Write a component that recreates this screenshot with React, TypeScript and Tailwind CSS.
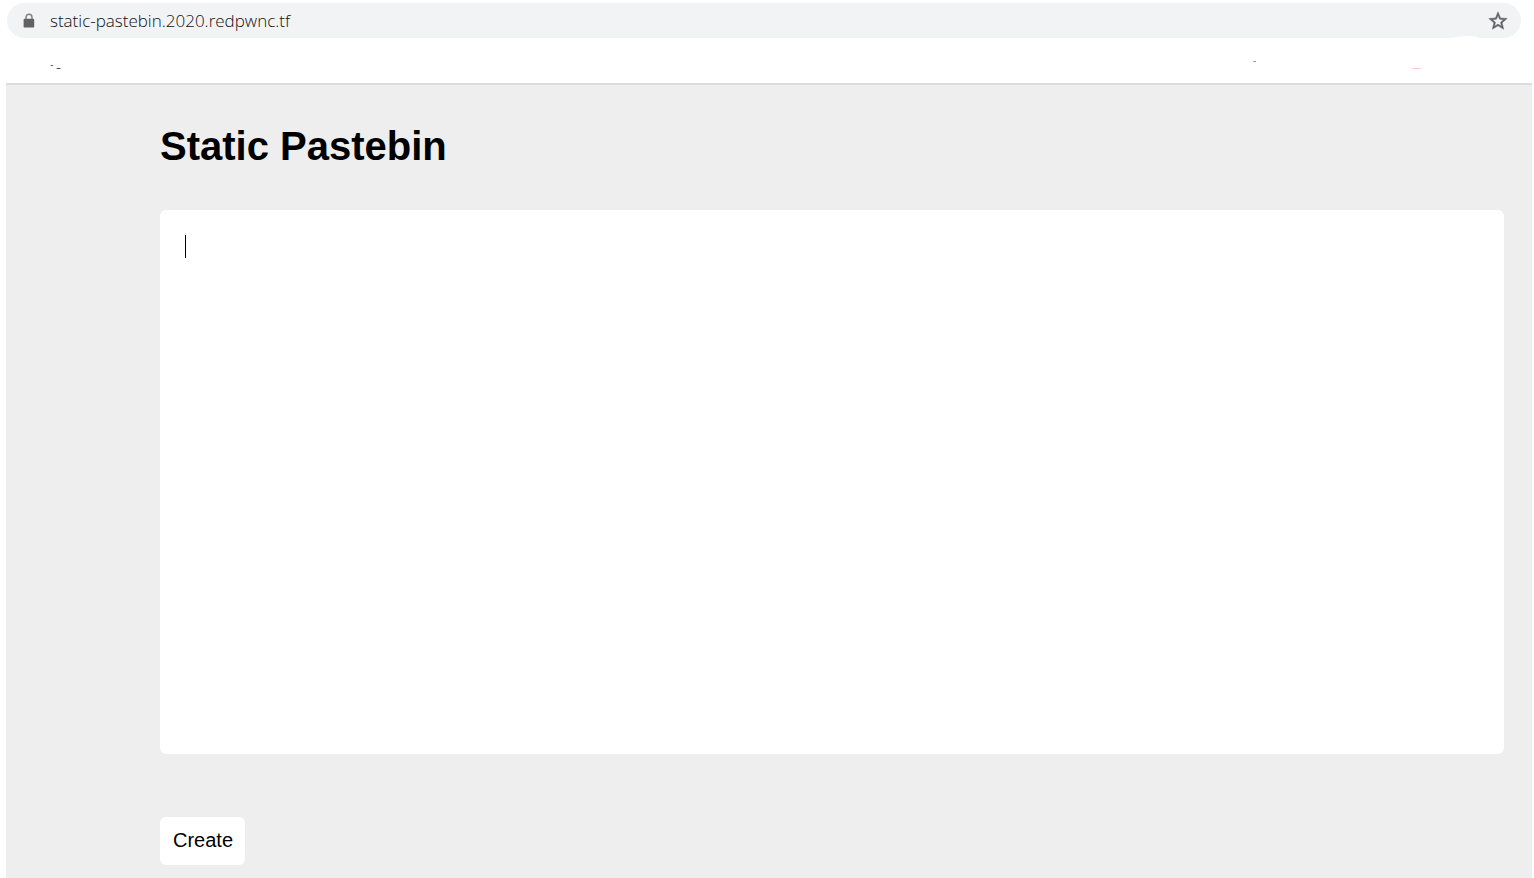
import { useState } from "react";

function LockIcon() {
  return (
    <svg className="h-4 w-3 shrink-0" viewBox="0 0 12 16" aria-hidden="true">
      <path d="M3 6.5V4.2a3 3 0 0 1 6 0v2.3" fill="none" stroke="#7b7e82" strokeWidth="1.4" />
      <rect x="0.6" y="5.8" width="10.6" height="8.8" rx="1.2" fill="#5f6165" />
    </svg>
  );
}

function StarIcon() {
  return (
    <svg
      className="size-[22px]"
      viewBox="0 0 24 24"
      fill="#5f6368"
      stroke="#5f6368"
      strokeWidth="0.5"
      aria-hidden="true"
    >
      <path d="M22 9.24l-7.19-.62L12 2 9.19 8.63 2 9.24l5.46 4.73L5.82 21 12 17.27 18.18 21l-1.63-7.03L22 9.24zM12 15.4l-3.76 2.27 1-4.28-3.32-2.88 4.38-.38L12 6.1l1.71 4.04 4.38.38-3.32 2.88 1 4.28L12 15.4z" />
    </svg>
  );
}

function AddressBar() {
  return (
    <div className="relative ml-[7px] mr-[13px] mt-[3px] flex h-[35px] items-center rounded-full bg-[#f1f3f4] pl-4 pr-3">
      <LockIcon />
      <input
        aria-label="Address"
        type="text"
        spellCheck={false}
        defaultValue="static-pastebin.2020.redpwnc.tf"
        className="ml-[15px] min-w-0 flex-1 bg-transparent font-['Open_Sans','Noto_Sans',sans-serif] text-[17px] font-light leading-6 text-[#101114] outline-none"
      />
      <button type="button" aria-label="Bookmark this page" className="shrink-0">
        <StarIcon />
      </button>
      <svg className="absolute bottom-0 right-10 h-0.5 w-[30px]" viewBox="0 0 30 2" aria-hidden="true">
        <path d="M0 2Q9 0 17 0Q25 0 28 2Z" fill="#fff" />
      </svg>
    </div>
  );
}

function BookmarksBar() {
  return (
    <div className="flex h-[45px] items-start justify-between pl-[50px] pr-[112px] pt-[23px]">
      <svg className="h-2 w-3" viewBox="0 0 12 8" aria-hidden="true">
        <path d="M0 4h1v1H0z" fill="#c3c8d4" />
        <path d="M1 4h2v1H1z" fill="#54617c" />
        <path d="M6 7h1v1H6z" fill="#e6b878" />
        <path d="M7 7h3v1H7z" fill="#4b4b58" />
        <path d="M10 7h1v1H10z" fill="#a8b4d8" />
      </svg>
      <svg className="h-2 w-[170px]" viewBox="0 0 170 8" aria-hidden="true">
        <path d="M1 0h3v1H1z" fill="#a0a0a0" />
        <path d="M159 7h11v1H159z" fill="#fde3e4" />
        <path d="M161 7h7v1H161z" fill="#fbc9cb" />
      </svg>
    </div>
  );
}

export default function App() {
  const [text, setText] = useState("");

  return (
    <div className="flex min-h-screen flex-col bg-white">
      <header>
        <AddressBar />
        <BookmarksBar />
      </header>
      <main className="ml-1.5 mr-0.5 flex flex-1 flex-col items-start border-t-2 border-[#dadce0] bg-[#eeeeee] pb-[13px] pl-[154px] pr-7 pt-[37px] font-['Liberation_Sans',Arial,sans-serif] text-black">
        <h1 className="text-[40px] font-bold leading-12">Static Pastebin</h1>
        <div className="relative mt-10 flex w-full">
          <textarea
            aria-label="Paste contents"
            value={text}
            onChange={(e) => setText(e.target.value)}
            className="h-[544px] w-full resize-none rounded-md bg-white p-6 text-xl outline-none"
          />
          {text === "" && (
            <span className="pointer-events-none absolute left-[25px] top-[25px] h-[23px] w-px bg-black" />
          )}
        </div>
        <button type="button" className="mt-[63px] h-12 rounded-md bg-white pb-0.5 pl-[13px] pr-3 text-xl">
          Create
        </button>
      </main>
    </div>
  );
}
